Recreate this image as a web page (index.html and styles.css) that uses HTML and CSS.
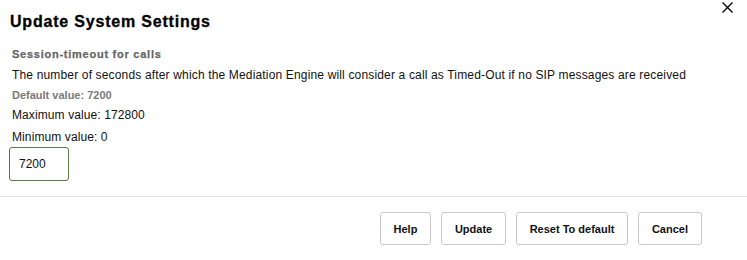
FILE: index.html
```html
<!DOCTYPE html>
<html>
<head>
<meta charset="utf-8">
<link rel="stylesheet" href="styles.css">
</head>
<body>
<div class="dialog">
  <div class="header">
    <h1 class="title">Update System Settings</h1>
    <button class="close" aria-label="Close">
      <svg width="11" height="11" viewBox="0 0 11 11"><path d="M0.5 0.5 L10.5 10.5 M10.5 0.5 L0.5 10.5" stroke="#000" stroke-width="1.4" fill="none"/></svg>
    </button>
  </div>
  <div class="content">
    <div class="sec">Session-timeout for calls</div>
    <div class="desc">The number of seconds after which the Mediation Engine will consider a call as Timed-Out if no SIP messages are received</div>
    <div class="default">Default value: 7200</div>
    <div class="limit max">Maximum value: 172800</div>
    <div class="limit min">Minimum value: 0</div>
    <input class="field" type="text" value="7200">
  </div>
  <div class="footer">
    <button class="btn">Help</button>
    <button class="btn">Update</button>
    <button class="btn">Reset To default</button>
    <button class="btn">Cancel</button>
  </div>
</div>
</body>
</html>
```
FILE: styles.css
```css
html, body {
  margin: 0;
  padding: 0;
  background: #fff;
}
body {
  font-family: "Liberation Sans", Arial, sans-serif;
  color: #111;
}
.dialog {
  width: 747px;
  height: 260px;
}
.header {
  display: flex;
  justify-content: space-between;
  align-items: flex-start;
  padding: 10px 14px 0 10px;
}
.title {
  margin: 0;
  font-size: 16px;
  line-height: 24px;
  font-weight: bold;
  letter-spacing: 0.8px;
  color: #000;
  -webkit-text-stroke: 0.3px #000;
}
.close {
  margin-top: -8px;
  padding: 0;
  border: 0;
  background: none;
  width: 11px;
  height: 11px;
  display: block;
}
.close svg { display: block; }
.content {
  padding: 12px 0 0 12px;
}
.sec {
  font-size: 11px;
  line-height: 16px;
  font-weight: bold;
  color: #666;
  letter-spacing: 0.75px;
  -webkit-text-stroke: 0.25px #666;
}
.desc {
  margin-top: 2px;
  font-size: 12px;
  line-height: 22px;
  letter-spacing: 0.16px;
  color: #111;
}
.default {
  font-size: 11px;
  line-height: 18px;
  font-weight: bold;
  color: #7a7a7a;
}
.limit {
  font-size: 12px;
  line-height: 20px;
  letter-spacing: 0.1px;
  color: #111;
}
.max { margin-top: 1px; }
.min { margin-top: 2px; }
.field {
  display: block;
  box-sizing: border-box;
  margin: 0 0 0 -3px;
  width: 60px;
  height: 34px;
  padding: 0 0 0 9px;
  border: 1px solid #5b7a45;
  border-radius: 3px;
  font-family: "Liberation Sans", Arial, sans-serif;
  font-size: 12px;
  color: #111;
  outline: none;
}
.footer {
  margin-top: 15px;
  border-top: 1px solid #e5e5e5;
  padding: 15px 45px 0 0;
  display: flex;
  justify-content: flex-end;
  gap: 9.5px;
}
.btn {
  box-sizing: border-box;
  height: 33px;
  padding: 0 13px;
  border: 1px solid #c8c8c8;
  border-radius: 3px;
  background: #fff;
  font-family: "Liberation Sans", Arial, sans-serif;
  font-size: 11px;
  font-weight: bold;
  color: #111;
}
```
